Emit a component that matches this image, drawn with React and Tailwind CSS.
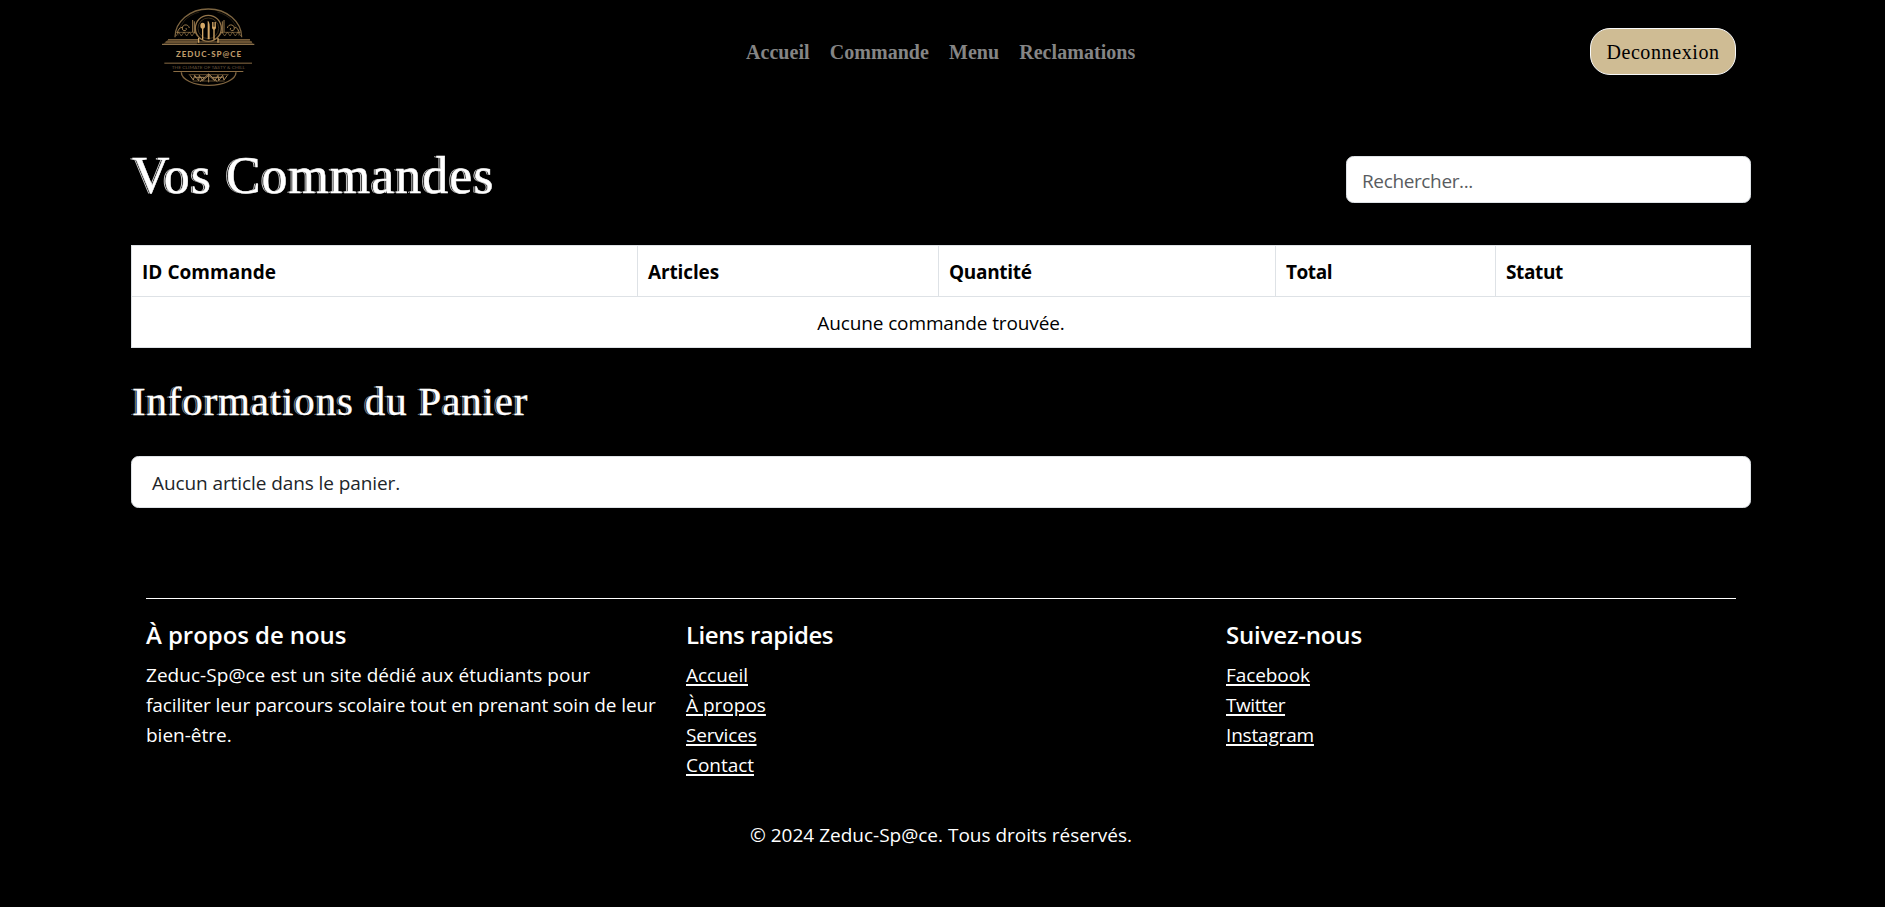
import React from "react";

const serif = "font-['Liberation_Serif',serif]";

function Logo() {
  return (
    <svg width="97" height="80" viewBox="30 21 291 240" fill="none" stroke="#8f7043" strokeWidth="3">
      <path d="M75 112 A100 85 0 0 1 275 112" stroke="#7d6541" strokeWidth="4" />
      <path d="M84 108 A91 76 0 0 1 148 36 M202 36 A91 76 0 0 1 266 108" stroke="#3a2d1b" strokeWidth="2" />
      <circle cx="175" cy="85" r="39" stroke="#94754a" strokeWidth="4" />
      <circle cx="175" cy="85" r="31" stroke="#5c4729" strokeWidth="2" />
      <g stroke="none" fill="#d3a767">
        <ellipse cx="158" cy="77" rx="7" ry="9" />
        <rect x="156" y="82" width="4" height="37" />
        <path d="M173 62 q6 3 6 18 v38 h-6 z" />
        <path d="M186 66 h2.500 v14 h2 v-14 h3 v14 h2 v-14 h2.500 v16 q0 6 -4 7 v30 h-4 v-30 q-4 -1 -4 -7 z" />
      </g>
      <g stroke="#9a7a4b">
        <path d="M128 60 V96 M133 64 V100 M222 60 V96 M217 64 V100" />
        <path d="M118 84 q-3 -11 -14 -9 q-9 3 -7 12 q2 7 9 5 q5 -3 2 -8 M96 82 q-12 2 -14 18" />
        <path d="M232 84 q3 -11 14 -9 q9 3 7 12 q-2 7 -9 5 q-5 -3 -2 -8 M254 82 q12 2 14 18" />
        <path d="M78 108 l8 -12 8 12 8 -12 8 12 8 -12 8 12 8 -12 8 12 M78 97 h60 M208 108 l8 -12 8 12 8 -12 8 12 8 -12 8 12 8 -12 8 12 M212 97 h60" strokeWidth="2" />
      </g>
      <path d="M54 119 H146 L140 131 H40 Z M204 119 H298 L310 131 H210 Z" fill="#4a3a24" stroke="none" />
      <g stroke="#8b6d43">
        <path d="M54 119 H146 M204 119 H300 M47 126 H306" />
        <path d="M36 133 H313" stroke="#a8875a" />
        <path d="M146 114 v14 M204 114 v14" stroke="#d3a767" strokeWidth="4" />
      </g>
      <text x="175.500" y="171" textAnchor="middle" textLength="195" lengthAdjust="spacing" className="font-['Lato',sans-serif] text-[24px] font-black" fill="#bd9a68" stroke="none">ZEDUC-SP@CE</text>
      <path d="M43 189.500 H306" stroke="#8a6d45" />
      <text x="175" y="208" textAnchor="middle" textLength="220" lengthAdjust="spacingAndGlyphs" className="font-['Lato',sans-serif] text-[13px]" fill="#65523a" stroke="none">THE CLIMATE OF TASTY &amp; CHILL</text>
      <path d="M70 214.500 H280" stroke="#8a6d45" />
      <path d="M94 217 A82 39 0 0 0 258 217" stroke="#806540" strokeWidth="4" />
      <path d="M116 224 H236 M128 243 H224" stroke="#8f7043" strokeWidth="2" />
      <path d="M120 226 l10 14 4 -14 12 16 2 -16 10 16 18 -16 18 16 10 -16 2 16 12 -16 4 14 10 -14 M150 245 L176 222 L202 245 M176 222 V247 M134 232 h30 M188 232 h30" stroke="#a8875a" strokeWidth="3" />
    </svg>
  );
}

const navItems = ["Accueil", "Commande", "Menu", "Reclamations"];

const columns = [
  { label: "ID Commande", cls: "w-[506px] tracking-[0.03px]" },
  { label: "Articles", cls: "w-[301px] tracking-[-0.13px]" },
  { label: "Quantité", cls: "w-[337px] tracking-[-0.32px]" },
  { label: "Total", cls: "w-[220px] tracking-[-0.46px]" },
  { label: "Statut", cls: "tracking-[-0.36px]" },
];

const quickLinks = [
  { label: "Accueil", cls: "tracking-[-0.02px]" },
  { label: "À propos", cls: "" },
  { label: "Services", cls: "tracking-[-0.18px]" },
  { label: "Contact", cls: "tracking-[-0.04px]" },
];

const socialLinks = [
  { label: "Facebook", cls: "tracking-[-0.08px]" },
  { label: "Twitter", cls: "tracking-[-0.42px]" },
  { label: "Instagram", cls: "tracking-[-0.18px]" },
];

function LinkList({ links }) {
  return (
    <ul>
      {links.map((l) => (
        <li key={l.label}>
          <a href="#" className={`underline decoration-2 underline-offset-[2px] ${l.cls}`}>{l.label}</a>
        </li>
      ))}
    </ul>
  );
}

export default function App() {
  return (
    <div className="h-[907px] overflow-hidden bg-white pr-[2px] font-['Open_Sans','Noto_Sans',sans-serif] text-[19px] leading-[30px]">
      <div className="h-full bg-black text-white">
        <header className="grid h-[104px] grid-cols-[586px_1fr_auto] items-start pl-[160px] pr-[149px]">
          <div className="pt-[7px]"><Logo /></div>
          <nav className={`flex gap-5 pt-[37px] ${serif} text-[20px] font-bold tracking-[0.05px] text-[#858585]`}>
            {navItems.map((n) => (
              <a key={n} href="#">{n}</a>
            ))}
          </nav>
          <button className={`mt-[28px] h-[47px] w-[146px] rounded-[20px] border border-[#f8f9fa] bg-[#cfbc94] ${serif} text-[20px] tracking-[0.6px] text-black`}>
            Deconnexion
          </button>
        </header>

        <main className="ml-[131px] w-[1620px]">
          <div className="flex h-[141px] items-start justify-between">
            <h1 className={`pl-px pt-[42px] ${serif} text-[52px] leading-[60px] tracking-[0.95px] [-webkit-text-stroke:0.5px_#fff] [text-shadow:-1px_0_0_#000,-2px_0_0_#c8c8c8]`}>
              Vos Commandes
            </h1>
            <input
              type="text"
              placeholder="Rechercher..."
              className="mt-[52px] h-[47px] w-[405px] rounded-[7.5px] border border-[#dee2e6] bg-white px-[15px] pt-[2px] tracking-[-0.37px] placeholder:text-[#595c5f]"
            />
          </div>

          <table className="w-[1620px] table-fixed border-collapse bg-white text-black">
            <thead>
              <tr>
                {columns.map((c) => (
                  <th key={c.label} className={`border border-[#dee2e6] px-[10px] pb-[9px] pt-[11px] text-left font-bold ${c.cls}`}>{c.label}</th>
                ))}
              </tr>
            </thead>
            <tbody>
              <tr>
                <td colSpan={5} className="border border-[#dee2e6] px-[10px] pb-[9px] pt-[11px] text-center tracking-[-0.12px]">Aucune commande trouvée.</td>
              </tr>
            </tbody>
          </table>

          <h2 className={`mt-[29px] pl-px ${serif} text-[41px] leading-[48px] tracking-[0.83px] [font-kerning:none] [-webkit-text-stroke:0.3px_#fff] [text-shadow:-1px_0_0_#000,-2px_0_0_#8a8a8a]`}>
            Informations du Panier
          </h2>

          <ul className="mt-[31px] rounded-[7.5px] border border-[#dee2e6] bg-white px-5 pb-[9px] pt-[11px] tracking-[-0.09px] text-[#212529]">
            <li>Aucun article dans le panier.</li>
          </ul>
        </main>

        <footer className="ml-[146px] mt-[90px] w-[1590px] border-t border-white pt-[21px]">
          <div className="grid grid-cols-[540px_540px_510px]">
            <section>
              <h5 className="mb-[10px] text-[24px] font-semibold leading-[30px] tracking-[-0.06px]">À propos de nous</h5>
              <p className="tracking-[0.04px]">Zeduc-Sp@ce est un site dédié aux étudiants pour</p>
              <p className="tracking-[-0.1px]">faciliter leur parcours scolaire tout en prenant soin de leur</p>
              <p>bien-être.</p>
            </section>
            <section>
              <h5 className="mb-[10px] text-[24px] font-semibold leading-[30px] tracking-[-0.47px]">Liens rapides</h5>
              <LinkList links={quickLinks} />
            </section>
            <section>
              <h5 className="mb-[10px] text-[24px] font-semibold leading-[30px] tracking-[-0.17px]">Suivez-nous</h5>
              <LinkList links={socialLinks} />
            </section>
          </div>
          <p className="mt-[40px] text-center">© 2024 Zeduc-Sp@ce. Tous droits réservés.</p>
        </footer>
      </div>
    </div>
  );
}
